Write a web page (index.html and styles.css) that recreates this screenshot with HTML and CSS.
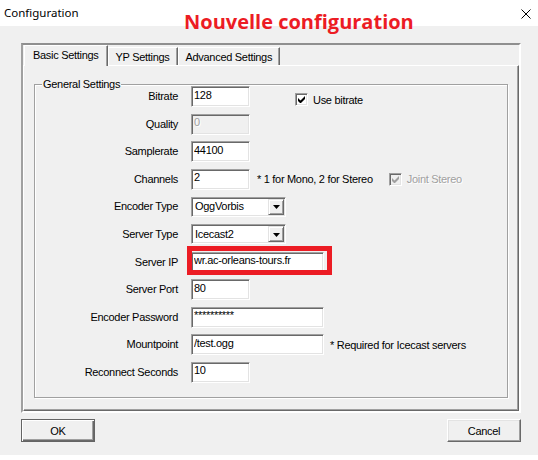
FILE: index.html
```html
<!DOCTYPE html>
<html lang="fr">
<head>
<meta charset="utf-8">
<title>Configuration</title>
<link rel="stylesheet" href="styles.css">
</head>
<body>
<div class="window">
  <header class="titlebar">
    <span class="title">Configuration</span>
    <svg class="close" width="10" height="10" viewBox="0 0 10 10"><path d="M0.5 0.5 L9.5 9.5 M9.5 0.5 L0.5 9.5" stroke="#000" stroke-width="1" fill="none"/></svg>
  </header>
  <div class="annotation">Nouvelle configuration</div>
  <main class="client">
    <div class="tabframe">
      <div class="tabs">
        <div class="tab active">Basic Settings</div>
        <div class="tab">YP Settings</div>
        <div class="tab">Advanced Settings</div>
      </div>
      <div class="panel">
        <fieldset class="group">
          <legend>General Settings</legend>
          <div class="form">
            <label class="label">Bitrate</label>
            <div class="fields">
              <input class="edit short" value="128">
              <span class="check use-bitrate"><span class="cb"><svg width="7" height="7" viewBox="0 0 7 7"><polygon points="0,2 2.5,4.5 7,0 7,3 2.5,7.5 0,5" fill="#000"/></svg></span>Use bitrate</span>
            </div>

            <label class="label">Quality</label>
            <div class="fields"><input class="edit short disabled" value="0" disabled></div>

            <label class="label">Samplerate</label>
            <div class="fields"><input class="edit short" value="44100"></div>

            <label class="label">Channels</label>
            <div class="fields">
              <input class="edit short" value="2">
              <span class="note note-channels">* 1 for Mono, 2 for Stereo</span>
              <span class="check joint grayed"><span class="cb cb-disabled"><svg width="7" height="7" viewBox="0 0 7 7"><polygon points="0,2 2.5,4.5 7,0 7,3 2.5,7.5 0,5" fill="#a0a0a0"/></svg></span>Joint Stereo</span>
            </div>

            <label class="label">Encoder Type</label>
            <div class="fields">
              <div class="combo"><span class="combo-text">OggVorbis</span><span class="drop"><svg width="7" height="4" viewBox="0 0 7 4"><polygon points="0,0 7,0 3.5,4" fill="#000"/></svg></span></div>
            </div>

            <label class="label">Server Type</label>
            <div class="fields">
              <div class="combo"><span class="combo-text">Icecast2</span><span class="drop"><svg width="7" height="4" viewBox="0 0 7 4"><polygon points="0,0 7,0 3.5,4" fill="#000"/></svg></span></div>
            </div>

            <label class="label">Server IP</label>
            <div class="fields">
              <span class="highlight"><input class="edit long" value="wr.ac-orleans-tours.fr"></span>
            </div>

            <label class="label">Server Port</label>
            <div class="fields"><input class="edit short" value="80"></div>

            <label class="label">Encoder Password</label>
            <div class="fields"><input class="edit long" value="**********"></div>

            <label class="label">Mountpoint</label>
            <div class="fields">
              <input class="edit long" value="/test.ogg">
              <span class="note note-mount">* Required for Icecast servers</span>
            </div>

            <label class="label">Reconnect Seconds</label>
            <div class="fields"><input class="edit short" value="10"></div>
          </div>
        </fieldset>
      </div>
    </div>
    <div class="buttons">
      <button class="btn default">OK</button>
      <button class="btn">Cancel</button>
    </div>
  </main>
</div>
</body>
</html>
```
FILE: styles.css
```css
*,
*::before,
*::after {
  box-sizing: border-box;
}

html,
body {
  margin: 0;
  background: #fff;
}

body {
  width: 538px;
  height: 460px;
  overflow: hidden;
  font-family: "Liberation Sans", Arial, sans-serif;
  font-size: 11px;
  letter-spacing: -0.3px;
  color: #000;
}

.window {
  position: relative;
  width: 538px;
}

.titlebar {
  height: 26px;
  background: #fff;
  display: flex;
  align-items: center;
  justify-content: space-between;
  padding: 0 7px 2px 4px;
  font-family: "Noto Sans", "Open Sans", sans-serif;
  font-size: 11.5px;
  letter-spacing: 0;
}

.close {
  display: block;
  margin-top: 3px;
}

.annotation {
  position: absolute;
  left: 184px;
  top: 12px;
  font-family: "Open Sans", "Noto Sans", sans-serif;
  font-weight: 700;
  font-size: 20px;
  line-height: 20px;
  letter-spacing: 0;
  color: #ec1c24;
  white-space: nowrap;
}

.client {
  background: #f0f0f0;
  height: 429px;
  padding: 17px 17px 13px 21px;
  display: flex;
  flex-direction: column;
}

.tabframe {
  height: 370px;
  border: 2px solid;
  border-color: #8f8f8f #fff #fff #a0a0a0;
  display: flex;
  flex-direction: column;
}

.tabs {
  height: 20px;
  display: flex;
  align-items: flex-end;
  padding-left: 1px;
}

.tab {
  height: 18px;
  padding: 3px 7px 0;
  line-height: 13px;
  white-space: nowrap;
  border-top: 1px solid #fff;
  border-left: 1px solid #fff;
  border-right: 1px solid #696969;
  box-shadow: inset -1px 0 0 #a0a0a0;
  background: #f0f0f0;
}

.tab.active {
  position: relative;
  z-index: 1;
  height: 21px;
  margin-bottom: -1px;
  padding: 3px 8px 0;
}

.panel {
  flex: 1;
  border: 1px solid;
  border-color: #fff #696969 #696969 #fff;
  box-shadow: inset -1px -1px 0 #a0a0a0;
}

.group {
  margin: 11.5px 10px 0 10px;
  padding: 0 0 14px 0;
  min-width: 0;
  border: 1px solid #a0a0a0;
  box-shadow: 1px 1px 0 #fff, inset 1px 1px 0 #fff;
}

.group legend {
  margin-left: 7px;
  padding: 0 1px;
  line-height: 13px;
  background: #f0f0f0;
}

.form {
  display: grid;
  grid-template-columns: 143px auto;
  column-gap: 13px;
  grid-auto-rows: 21px;
  row-gap: 6.6px;
  margin-top: -4.5px;
}

.label {
  text-align: right;
  line-height: 21px;
  white-space: nowrap;
}

.fields {
  display: flex;
  align-items: center;
  white-space: nowrap;
}

.edit {
  height: 21px;
  margin: 0;
  border: 1px solid;
  border-color: #a0a0a0 #fff #fff #a0a0a0;
  box-shadow: inset 1px 1px 0 #696969, inset -1px -1px 0 #e3e3e3;
  padding: 0 0 4px 2px;
  font: inherit;
  letter-spacing: inherit;
  line-height: 13px;
  color: #000;
  background: #fff;
  outline: none;
  border-radius: 0;
}

.short {
  width: 59px;
}

.long {
  width: 133px;
}

.edit.disabled {
  background: #f0f0f0;
  color: #a0a0a0;
  -webkit-text-fill-color: #a0a0a0;
  text-shadow: 1px 1px 0 #fff;
}

.combo {
  width: 95px;
  height: 20px;
  border: 1px solid;
  border-color: #a0a0a0 #fff #fff #a0a0a0;
  box-shadow: inset 1px 1px 0 #696969, inset -1px -1px 0 #e3e3e3;
  background: #fff;
  display: flex;
  align-items: center;
  padding: 1px 1px 1px 3px;
}

.combo-text {
  flex: 1;
  line-height: 13px;
}

.drop {
  width: 16px;
  height: 16px;
  background: #f0f0f0;
  border: 1px solid;
  border-color: #e3e3e3 #696969 #696969 #e3e3e3;
  box-shadow: inset 1px 1px 0 #fff, inset -1px -1px 0 #a0a0a0;
  display: flex;
  align-items: center;
  justify-content: center;
}

.drop svg {
  display: block;
  margin-top: 1px;
}

.check {
  display: flex;
  align-items: center;
  gap: 5px;
}

.cb {
  width: 13px;
  height: 13px;
  border: 1px solid;
  border-color: #a0a0a0 #fff #fff #a0a0a0;
  box-shadow: inset 1px 1px 0 #696969, inset -1px -1px 0 #e3e3e3;
  background: #fff;
  display: flex;
  align-items: center;
  justify-content: center;
}

.cb svg {
  display: block;
}

.cb-disabled {
  background: #f0f0f0;
}

.use-bitrate {
  margin-left: 45px;
  margin-top: 6px;
}

.note-channels {
  margin-left: 7px;
}

.joint {
  margin-left: 16px;
}

.grayed {
  color: #a0a0a0;
  text-shadow: 1px 1px 0 #fff;
}

.note-mount {
  margin-left: 6px;
}

.highlight {
  position: relative;
  display: flex;
}

.highlight::after {
  content: "";
  position: absolute;
  top: -6px;
  left: -4px;
  width: 145px;
  height: 29px;
  border: 5px solid #ec1c24;
  pointer-events: none;
}

.buttons {
  display: flex;
  justify-content: space-between;
  margin-top: 6px;
}

.btn {
  width: 74px;
  height: 23px;
  margin: 0;
  padding: 0;
  font: inherit;
  letter-spacing: inherit;
  color: #000;
  background: #f0f0f0;
  border: 1px solid;
  border-color: #fff #696969 #696969 #fff;
  box-shadow: inset -1px -1px 0 #a0a0a0, inset 1px 1px 0 #e3e3e3;
  border-radius: 0;
}

.btn.default {
  border-color: #646464;
  box-shadow: inset 1px 1px 0 #fff, inset -1px -1px 0 #696969, inset -2px -2px 0 #a0a0a0;
}
```
